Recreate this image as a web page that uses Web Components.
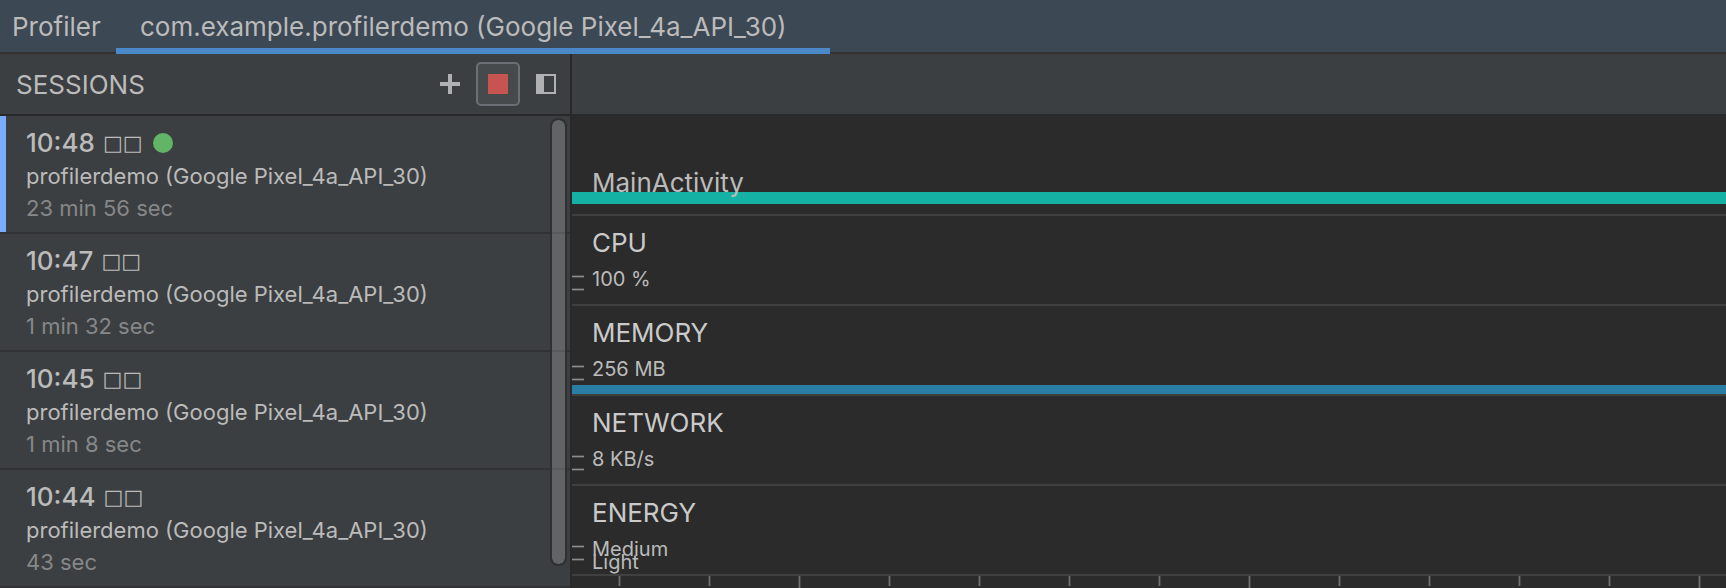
<!DOCTYPE html>
<html lang="en">
<head>
<meta charset="utf-8">
<title>Profiler</title>
<style>
html, body { margin: 0; height: 100%; background: #2b2b2b; }
body { font-family: Inter, "Noto Sans", sans-serif; font-size: 26px; line-height: 32px; color: #bbbbbb; }
</style>
</head>
<body>
<profiler-window></profiler-window>
<script>
const define = (name, html, setup) => {
  const template = document.createElement('template');
  template.innerHTML = html;
  customElements.define(name, class extends HTMLElement {
    constructor() {
      super();
      this.attachShadow({ mode: 'open' }).append(template.content.cloneNode(true));
      if (setup) setup(this);
    }
  });
};

define('profiler-tabs', `
<style>
:host { display: flex; height: 54px; box-sizing: border-box; background: linear-gradient(#3d4855 52px, #323232 52px); }
span { padding: 11px 0 0 12px; width: 104px; white-space: nowrap; }
button { font: inherit; color: inherit; background: none; border: 0; border-bottom: 6px solid #4a88c7; padding: 5px 24px 0; min-width: 714px; text-align: left; white-space: nowrap; }
</style>
<span>Profiler</span>
<button role="tab" aria-selected="true"><slot></slot></button>`);

define('icon-button', `
<style>
:host { display: block; }
button { display: grid; place-items: center; width: 44px; height: 44px; box-sizing: border-box; padding: 0; border: 2px solid transparent; border-radius: 5px; background: none; }
:host([boxed]) button { background: #474a4d; border-color: #6b6f75; }
</style>
<button><slot></slot></button>`, host => {
  host.shadowRoot.querySelector('button').setAttribute('aria-label', host.getAttribute('label') || 'Action');
});

define('sessions-toolbar', `
<style>
:host { display: flex; align-items: center; gap: 4px; height: 60px; padding: 0 2px 0 16px; border-bottom: 2px solid #292929; }
h1 { flex: 1; margin: 0; padding-top: 2px; font: inherit; }
svg { display: block; }
</style>
<h1>SESSIONS</h1>
<icon-button label="Start new session"><svg width="20" height="20" fill="#afb1b3"><path d="M8 0h4v8h8v4h-8v8H8v-8H0V8h8z"/></svg></icon-button>
<icon-button label="Stop session" boxed><svg width="20" height="20" fill="#c75450"><path d="M0 0h20v20H0z"/></svg></icon-button>
<icon-button label="Collapse panel"><svg width="20" height="20" fill="#afb1b3"><path fill-rule="evenodd" d="M0 0h20v20H0zM8 2v16h10V2z"/></svg></icon-button>`);

define('session-item', `
<style>
:host { display: block; height: 105px; padding: 11px 0 0 26px; border-bottom: 2px solid #303234; }
:host([selected]) { background: linear-gradient(#7aabff, #7aabff) 0 0 / 6px 116px no-repeat; }
.time { display: flex; align-items: center; margin-bottom: 1px; font-weight: 500; }
.boxes { font-family: "DejaVu Sans", sans-serif; font-size: 21px; font-weight: 400; margin-left: 8px; }
.live { display: none; width: 20px; height: 20px; border-radius: 50%; background: #62b566; margin-left: 10px; }
:host([selected]) .live { display: block; }
.name, .length { font-size: 22px; white-space: nowrap; }
.length { color: #868788; }
</style>
<div class="time"><slot name="time"></slot><span class="boxes">□□</span><i class="live"></i></div>
<div class="name"><slot></slot></div>
<div class="length"><slot name="length"></slot></div>`);

define('sessions-panel', `
<style>
:host { display: block; width: 570px; flex: none; background: #3c3f41; border-right: 2px solid #292929; }
.list { position: relative; }
.thumb { position: absolute; top: 2px; right: 3px; bottom: 22px; width: 17px; box-sizing: border-box; border: 2px solid #2e3032; border-radius: 8px; background: rgba(166,166,166,.35); background-clip: padding-box; }
</style>
<sessions-toolbar></sessions-toolbar>
<div class="list">
<session-item selected><span slot="time">10:48</span>profilerdemo (Google Pixel_4a_API_30)<span slot="length">23 min 56 sec</span></session-item>
<session-item><span slot="time">10:47</span>profilerdemo (Google Pixel_4a_API_30)<span slot="length">1 min 32 sec</span></session-item>
<session-item><span slot="time">10:45</span>profilerdemo (Google Pixel_4a_API_30)<span slot="length">1 min 8 sec</span></session-item>
<session-item><span slot="time">10:44</span>profilerdemo (Google Pixel_4a_API_30)<span slot="length">43 sec</span></session-item>
<div class="thumb"></div>
</div>`);

define('activity-track', `
<style>
:host { display: grid; height: 98px; border-bottom: 2px solid #404040; grid-template-rows: 76px 12px; }
.bar { grid-area: 2 / 1; background: #14b1a4; }
.name { grid-area: 1 / 1 / 3 / 2; padding: 51px 0 0 20px; z-index: 1; }
</style>
<div class="bar"></div>
<div class="name"><slot></slot></div>`);

define('monitor-track', `
<style>
:host { display: flex; flex-direction: column; height: 88px; border-bottom: 2px solid #404040; }
h2 { font: inherit; color: #cacaca; margin: 0; padding: 11px 0 14px 20px; }
.scale { display: flex; height: 22px; font-size: 20px; line-height: 13px; }
.ticks { display: grid; grid-auto-rows: 13px; width: 12px; margin-right: 8px; }
.ticks i { height: 1px; margin-top: 2px; border: 1px solid #4c4c4c; border-width: 1px 0; background: #8c8c8c; }
::slotted(div) { height: 13px; }
.line { display: none; height: 9px; background: #2b7ea3; }
:host([filled]) .line { display: block; }
</style>
<h2><slot name="title"></slot></h2>
<div class="scale"><div class="ticks"><i></i><i></i></div><div><slot></slot></div></div>
<div class="line"></div>`);

define('time-ruler', `
<style>
:host { display: block; flex: 1; min-height: 12px; }
svg { display: block; width: 100%; height: 12px; }
</style>
<svg aria-hidden="true"><defs><pattern id="t" width="450" height="12" patternUnits="userSpaceOnUse" patternTransform="translate(-224 0)">
<g fill="#464646"><path d="M0 0h3v12H0zM90 0h3v10h-3zM180 0h3v10h-3zM270 0h3v10h-3zM360 0h3v10h-3z"/></g>
<g fill="#707070"><path d="M1 0h1v12H1zM91 0h1v10h-1zM181 0h1v10h-1zM271 0h1v10h-1zM361 0h1v10h-1z"/></g>
</pattern></defs><rect width="100%" height="12" fill="url(#t)"/></svg>`);

define('monitor-stage', `
<style>
:host { display: flex; flex-direction: column; flex: 1; min-width: 0; background: #2b2b2b; }
.toolbar { height: 60px; background: #3c3f41; border-bottom: 2px solid #292929; }
</style>
<div class="toolbar"></div>
<activity-track>MainActivity</activity-track>
<monitor-track><span slot="title">CPU</span><div>100 %</div></monitor-track>
<monitor-track filled><span slot="title">MEMORY</span><div>256 MB</div></monitor-track>
<monitor-track><span slot="title">NETWORK</span><div>8 KB/s</div></monitor-track>
<monitor-track><span slot="title">ENERGY</span><div>Medium</div><div>Light</div></monitor-track>
<time-ruler></time-ruler>`);

define('profiler-window', `
<style>
:host { display: flex; flex-direction: column; min-height: 100%; }
main { display: flex; flex: 1; }
</style>
<profiler-tabs>com.example.profilerdemo (Google Pixel_4a_API_30)</profiler-tabs>
<main><sessions-panel></sessions-panel><monitor-stage></monitor-stage></main>`);
</script>
</body>
</html>
